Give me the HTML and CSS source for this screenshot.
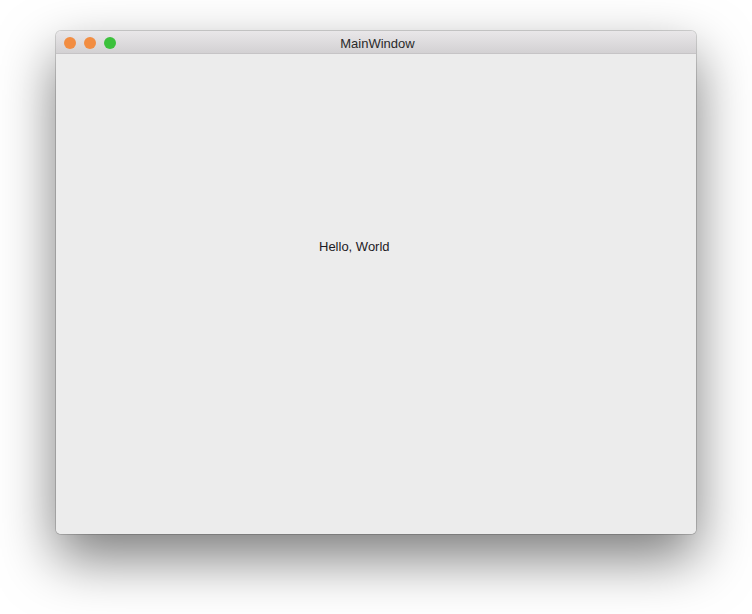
FILE: index.html
```html
<!DOCTYPE html>
<html>
<head>
<meta charset="utf-8">
<link rel="stylesheet" href="styles.css">
</head>
<body>
<div class="window">
  <div class="titlebar">
    <div class="lights">
      <span class="light close"></span>
      <span class="light min"></span>
      <span class="light max"></span>
    </div>
    <div class="title">MainWindow</div>
  </div>
  <div class="content">
    <div class="label">Hello, World</div>
  </div>
</div>
</body>
</html>
```
FILE: styles.css
```css
html, body {
  margin: 0;
  padding: 0;
  background: #ffffff;
  width: 752px;
  height: 614px;
  overflow: hidden;
}
body {
  padding: 31px 0 0 56px;
  box-sizing: border-box;
  font-family: "Liberation Sans", "Helvetica Neue", Arial, sans-serif;
}
.window {
  width: 640px;
  height: 503px;
  border-radius: 5px;
  overflow: hidden;
  box-shadow: 0 0 0 1px rgba(0,0,0,0.16), 0 24px 55px 0 rgba(0,0,0,0.52);
  background: #ececec;
  display: flex;
  flex-direction: column;
}
.titlebar {
  height: 22px;
  flex: none;
  background: linear-gradient(#e9e7e9, #d3d1d3);
  border-bottom: 1px solid #c6c4c6;
  position: relative;
  display: flex;
  align-items: center;
  justify-content: center;
}
.lights {
  position: absolute;
  left: 8px;
  top: 6px;
  display: flex;
  gap: 8px;
}
.light {
  width: 12px;
  height: 12px;
  border-radius: 50%;
  display: block;
}
.close, .min { background: #f28d42; }
.max { background: #3cc13c; }
.title {
  font-size: 13px;
  color: #2a2a2a;
  line-height: 22px;
  padding: 3px 0 0 3px;
}
.content {
  flex: 1;
  background: #ececec;
  padding: 185px 0 0 263px;
  box-sizing: border-box;
}
.label {
  font-size: 13px;
  color: #1c1a24;
  line-height: 16px;
}
```
